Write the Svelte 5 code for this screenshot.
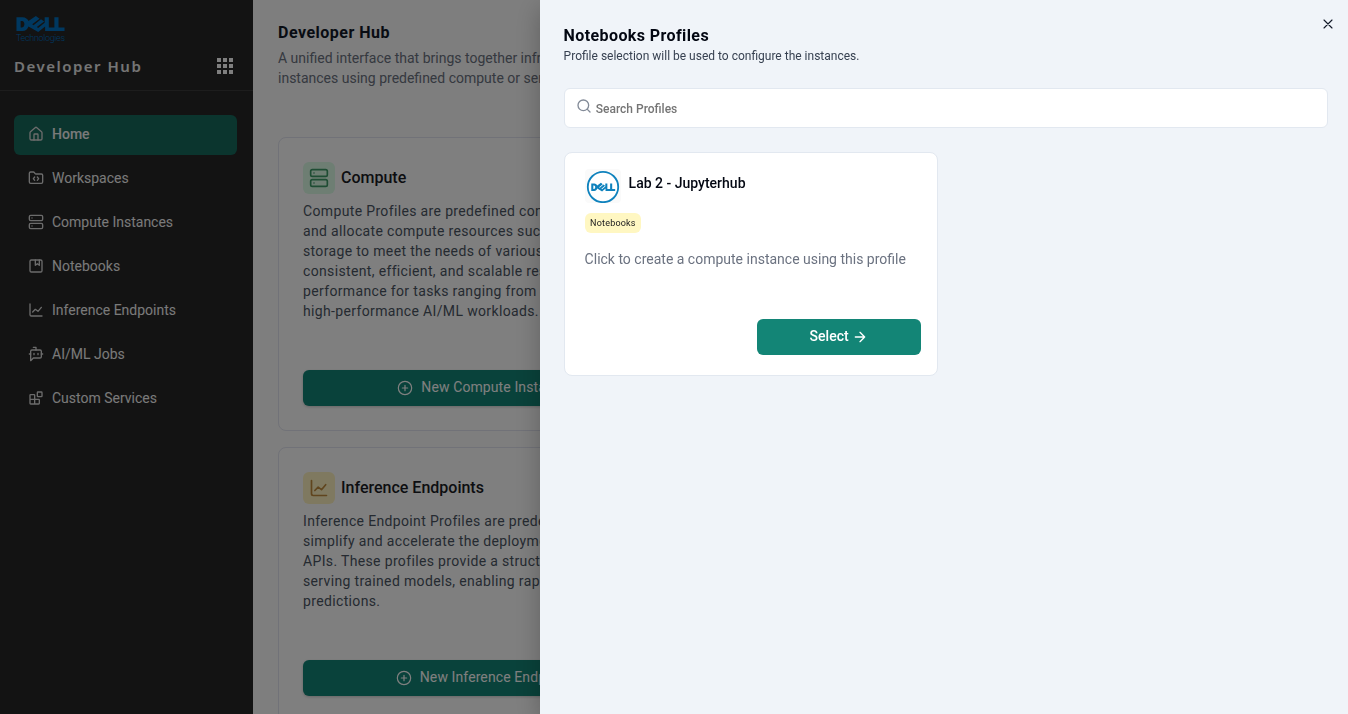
<script>
  const icons = {
    home: '<path d="M15 21v-8a1 1 0 0 0-1-1h-4a1 1 0 0 0-1 1v8"/><path d="M3 10a2 2 0 0 1 .709-1.528l7-5.999a2 2 0 0 1 2.582 0l7 5.999A2 2 0 0 1 21 10v9a2 2 0 0 1-2 2H5a2 2 0 0 1-2-2z"/>',
    folder: '<path d="M10 10.5 8 13l2 2.5"/><path d="m14 10.5 2 2.5-2 2.5"/><path d="M20 20a2 2 0 0 0 2-2V8a2 2 0 0 0-2-2h-7.9a2 2 0 0 1-1.69-.9L9.6 3.9A2 2 0 0 0 7.93 3H4a2 2 0 0 0-2 2v13a2 2 0 0 0 2 2z"/>',
    server: '<rect width="20" height="8" x="2" y="2" rx="2"/><rect width="20" height="8" x="2" y="14" rx="2"/><path d="M6 6h.01M6 18h.01"/>',
    notebook: '<rect width="18" height="18" x="3" y="3" rx="2"/><path d="M11 3v8l3-2.5 3 2.5V3"/>',
    chart: '<path d="M3 3v16a2 2 0 0 0 2 2h16"/><path d="m7 15 4-4 4 3 5-6"/>',
    bot: '<path d="M12 6V2H8"/><path d="m8 18-4 4V8a2 2 0 0 1 2-2h12a2 2 0 0 1 2 2v8a2 2 0 0 1-2 2Z"/><path d="M2 12h2M9 11v2M15 11v2M20 12h2"/>',
    blocks: '<rect width="7" height="7" x="14" y="3" rx="1"/><path d="M10 21V8a1 1 0 0 0-1-1H4a1 1 0 0 0-1 1v12a1 1 0 0 0 1 1h12a1 1 0 0 0 1-1v-5a1 1 0 0 0-1-1H3"/>',
    plus: '<circle cx="12" cy="12" r="10"/><path d="M8 12h8M12 8v8"/>',
    arrow: '<path d="M5 12h14M12 5l7 7-7 7"/>',
    close: '<path d="M18 6 6 18M6 6l12 12"/>',
    search: '<circle cx="11" cy="11" r="8"/><path d="m21 21-4.3-4.3"/>'
  };
  const nav = [
    ['Home', 'home'],
    ['Workspaces', 'folder'],
    ['Compute Instances', 'server'],
    ['Notebooks', 'notebook'],
    ['Inference Endpoints', 'chart'],
    ['AI/ML Jobs', 'bot'],
    ['Custom Services', 'blocks']
  ];
  const cards = [
    {
      title: 'Compute', icon: 'server', tone: 'green', action: 'New Compute Instance',
      lines: ['Compute Profiles are predefined con', 'and allocate compute resources such', 'storage to meet the needs of various', 'consistent, efficient, and scalable res', 'performance for tasks ranging from', 'high-performance AI/ML workloads.']
    },
    {
      title: 'Inference Endpoints', icon: 'chart', tone: 'yellow', action: 'New Inference Endpoint',
      lines: ['Inference Endpoint Profiles are prede', 'simplify and accelerate the deployme', 'APIs. These profiles provide a structu', 'serving trained models, enabling rapi', 'predictions.']
    }
  ];
</script>

{#snippet icon(name, size, width = 2)}
  <svg class="icon" width={size} height={size} viewBox="0 0 24 24" fill="none" stroke="currentColor" stroke-width={width} stroke-linecap="round" stroke-linejoin="round">{@html icons[name]}</svg>
{/snippet}

{#snippet dellMark()}
  <path d="M2 2H15C22 2 26 6 28 10L44 -1L52 5L36 17L39 19L55 6L62 11L46 23L49 25L63 14V2H72V24H84V2H93V24H106V32H64V22L49 34L28 22C26 27 22 32 15 32H2ZM11 10V24H14C21 24 21 10 14 10Z" fill="currentColor" fill-rule="evenodd" />
{/snippet}

<div class="app">
  <aside>
    <header class="brand">
      <div class="logo">
        <svg width="49" height="16" viewBox="1 -1 106 35" preserveAspectRatio="none">{@render dellMark()}</svg>
        <span>Technologies</span>
      </div>
      <div class="brand-row">
        <strong>Developer Hub</strong>
        <div class="dots">{#each Array(9) as _}<i></i>{/each}</div>
      </div>
    </header>
    <nav>
      {#each nav as [label, glyph], i}
        <a class:active={i === 0}>{@render icon(glyph, 16)}<span>{label}</span></a>
      {/each}
    </nav>
  </aside>

  <main>
    <h1>Developer Hub</h1>
    <p class="intro">A unified interface that brings together infrastructure<br />instances using predefined compute or service</p>
    <div class="cards">
      {#each cards as card}
        <section class="card">
          <div class="card-title">
            <span class="tile {card.tone}">{@render icon(card.icon, 20)}</span>
            <h2>{card.title}</h2>
          </div>
          <p>{#each card.lines as line}{line}<br />{/each}</p>
          <button>{@render icon('plus', 16, 1.8)}<span>{card.action}</span></button>
        </section>
      {/each}
    </div>
  </main>
</div>

<div class="overlay"></div>

<div class="drawer">
  <div class="drawer-head">
    <div>
      <h3>Notebooks Profiles</h3>
      <p>Profile selection will be used to configure the instances.</p>
    </div>
    <span class="close">{@render icon('close', 16, 1.7)}</span>
  </div>
  <label class="search">
    {@render icon('search', 16)}
    <input placeholder="Search Profiles" />
  </label>
  <section class="profile">
    <div class="profile-head">
      <div class="avatar">
        <svg width="36" height="34" viewBox="0 0 36 34">
          <circle cx="18" cy="18" r="15.2" fill="#fff" stroke="#0f82bd" stroke-width="1.8" />
          <g transform="translate(5.8 14) scale(.23 .25)" color="#0f82bd">{@render dellMark()}</g>
        </svg>
      </div>
      <h4>Lab 2 - Jupyterhub</h4>
    </div>
    <span class="tag">Notebooks</span>
    <p>Click to create a compute instance using this profile</p>
    <button class="select"><span>Select</span>{@render icon('arrow', 16)}</button>
  </section>
</div>

<style>
  :global(body) { overflow: hidden; background: #fff; }
  :global(*) { box-sizing: border-box; }
  h1, h2, h3, h4, p { margin: 0; }
  .icon { flex: none; display: block; }
  .app { display: flex; height: 714px; overflow: hidden; font-family: Roboto, sans-serif; }
  aside { width: 253px; flex: none; background: #262626; color: #eaeaea; }
  .brand { height: 91px; padding: 16px 20px 0 14px; border-bottom: 1px solid #3a3a3a; }
  .logo { width: 52px; height: 29px; padding-left: 2px; color: #0071c0; }
  .logo svg { display: block; }
  .logo span { display: block; font-size: 9px; line-height: 11px; margin-top: 1px; letter-spacing: -0.32px; font-weight: 300; }
  .brand-row { display: flex; align-items: center; justify-content: space-between; height: 42px; }
  .brand strong { font: 600 15px/20px "Noto Sans", sans-serif; letter-spacing: 1.5px; padding-bottom: 1px; }
  .dots { display: grid; grid-template-columns: repeat(3, 4px); gap: 2px; }
  .dots i { width: 4px; height: 4px; background: #fff; }
  nav { display: flex; flex-direction: column; gap: 4px; padding: 24px 16px 0 14px; }
  nav a { display: flex; align-items: center; gap: 8px; height: 40px; padding: 0 14px 2px; border-radius: 6px; font-size: 14px; font-weight: 400; color: #f4f4f4; }
  nav a .icon { color: #d8d8d8; }
  nav a.active { background: #166a5d; font-weight: 500; }
  main { width: 1095px; flex: none; padding: 22px 25px; background: #fcfcfc; }
  h1 { font-size: 16px; line-height: 22px; font-weight: 700; color: #111827; letter-spacing: 0.5px; }
  .intro { margin-top: 4px; font-size: 14px; line-height: 20px; color: #6b7280; }
  .cards { display: grid; gap: 16px; width: 410px; margin-top: 49px; }
  .card { display: flex; flex-direction: column; padding: 24px; border: 1px solid #e2e4f0; border-radius: 8px; background: #fff; }
  .card-title { display: flex; align-items: center; gap: 6px; }
  .tile { display: grid; place-items: center; width: 32px; height: 32px; border-radius: 6px; }
  .green { background: #dcfce7; color: #3f9b68; }
  .yellow { background: #fef3c0; color: #c08a3c; }
  h2 { font-size: 16px; line-height: 24px; font-weight: 500; color: #1a1c24; }
  .card p { margin: 7px 0 49px; font-size: 14px; line-height: 20px; letter-spacing: 0.35px; color: #4b5563; white-space: nowrap; }
  button { display: flex; align-items: center; justify-content: center; gap: 8px; height: 36px; border: 0; border-radius: 6px; background: #138576; color: #fff; font: 400 14px/20px Roboto, sans-serif; }
  .card button { flex: none; box-shadow: 0 1px 3px #0003; }
  .card button span { padding-bottom: 2px; letter-spacing: 0.1px; }
  .overlay { position: fixed; inset: 0; background: rgba(0, 0, 0, 0.5); }
  .drawer { position: fixed; top: 0; right: 0; bottom: 0; width: 808.4px; padding: 24px 20px 24px 24px; background: #f0f4f9; box-shadow: 0 8px 24px rgba(0, 0, 0, 0.25); font-family: Roboto, sans-serif; }
  .drawer-head { display: flex; justify-content: space-between; height: 64px; }
  h3 { padding-top: 1px; font-size: 16px; line-height: 21px; font-weight: 700; color: #030712; letter-spacing: 0.4px; }
  .drawer-head p { margin-top: 2px; font-size: 12px; line-height: 16px; color: #374151; }
  .close { margin: -8px -8px 0 0; color: #111827; }
  .search { display: flex; align-items: center; gap: 4px; height: 40px; padding: 0 12px 0 11.2px; border: 1px solid #e2e8f0; border-radius: 6px; background: #fff; }
  .search .icon { margin-top: -4px; color: #838b98; }
  input { flex: 1; min-width: 0; border: 0; outline: 0; padding: 1px 0 0; background: none; font: 500 12px/16px Roboto, sans-serif; }
  input::placeholder { color: #757575; }
  .profile { display: flex; flex-direction: column; width: 374px; height: 224px; margin-top: 24px; padding: 16px 16px 20px 20px; border: 1px solid #e2e8f0; border-radius: 8px; background: #fff; }
  .profile-head { display: flex; gap: 8px; height: 34px; }
  .avatar { width: 36px; height: 34px; border-radius: 4px; background: #fafafa; }
  .avatar svg { display: block; }
  h4 { padding-top: 4px; font-size: 14px; line-height: 20px; font-weight: 500; color: #030712; }
  .tag { align-self: flex-start; margin-top: 10px; padding: 0 5.5px; border-radius: 6px; background: #fff7c2; color: #18181b; font-size: 9px; line-height: 20px; letter-spacing: 0.2px; }
  .profile p { margin-top: 16px; font-size: 14px; line-height: 20px; color: #6b7280; }
  .select { width: 164px; margin-top: auto; align-self: flex-end; gap: 3px; font-weight: 500; }
  .select span { padding-bottom: 2px; }
</style>
